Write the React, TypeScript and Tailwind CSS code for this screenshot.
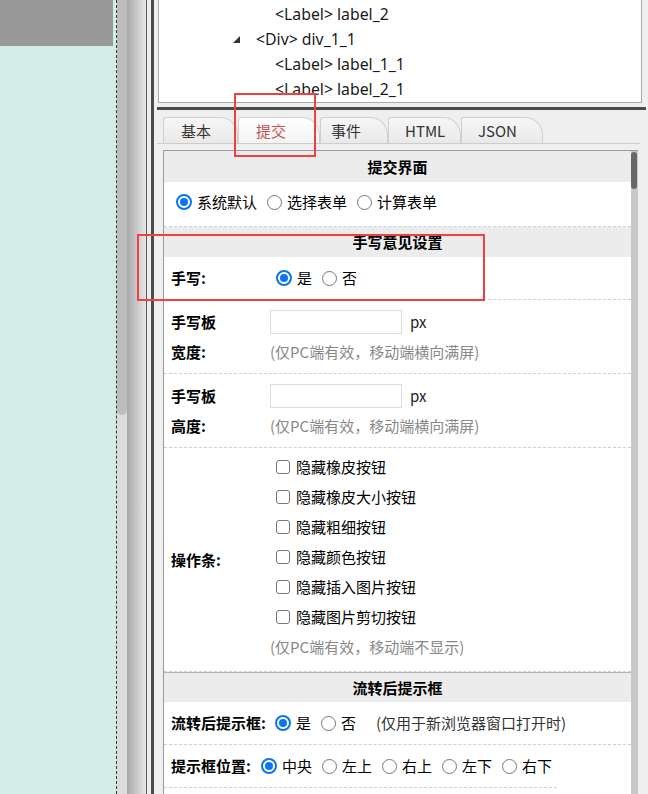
import React from "react";

const Radio = ({ checked }: { checked?: boolean }) =>
    checked ? (
        <span className="inline-flex w-[16px] h-[16px] shrink-0 items-center justify-center rounded-full border-2 border-[#0b74f1] bg-white">
            <span className="w-[8px] h-[8px] rounded-full bg-[#0b74f1]" />
        </span>
    ) : (
        <span className="inline-block w-[15px] h-[15px] shrink-0 rounded-full border border-[#767676] bg-white" />
    );

const RadioItem = ({ label, checked, className = "" }: { label: string; checked?: boolean; className?: string }) => (
    <span className={`inline-flex items-center ${className}`}>
        <Radio checked={checked} />
        <span className="ml-[5px]">{label}</span>
    </span>
);

const Checkbox = ({ label }: { label: string }) => (
    <div className="h-[30px] flex items-center">
        <span className="ml-[6px] w-[14px] h-[14px] rounded-[3px] border-[1.5px] border-[#777] bg-white shrink-0" />
        <span className="ml-[6px]">{label}</span>
    </div>
);

const SectionHeader = ({ title, top }: { title: string; top?: boolean }) => (
    <div
        className={`h-[30px] bg-[#ececec] flex items-center justify-center font-bold text-black ${
            top ? "border-t border-[#b4b4b4]" : ""
        }`}
    >
        {title}
    </div>
);

const SizeRow = ({ label }: { label: string }) => (
    <div className="h-[74px] border-b border-dashed border-[#cfcfcf] pt-[10px] flex">
        <div className="w-[106px] pl-[7px] font-bold text-black">
            <div className="h-[24px] flex items-center">手写板</div>
            <div className="h-[24px] mt-[6px] flex items-center">{label}</div>
        </div>
        <div>
            <div className="h-[24px] flex items-center">
                <span className="w-[132px] h-[24px] border border-[#dcdcdc] bg-white" />
                <span className="ml-[8px] text-[#222]">px</span>
            </div>
            <div className="h-[24px] mt-[6px] flex items-center text-[#888]">(仅PC端有效，移动端横向满屏)</div>
        </div>
    </div>
);

const tabs = [
    { name: "基本", w: "w-[75px]", pl: "pl-[17px]" },
    { name: "提交", w: "w-[82px]", pl: "pl-[17px]", active: true },
    { name: "事件", w: "w-[68px]", pl: "pl-[10px]" },
    { name: "HTML", w: "w-[73px]", pl: "pl-[16px]" },
    { name: "JSON", w: "w-[82px]", pl: "pl-[16px]" },
];

export default function App() {
    return (
        <div className="relative w-[648px] h-[794px] overflow-hidden flex font-['Noto_Sans_CJK_SC',sans-serif] text-[15px] leading-[20px]">
            {/* canvas */}
            <div className="w-[117px] shrink-0 bg-[#d4ece6] border-r border-dashed border-[#333]">
                <div className="w-[113px] h-[46px] bg-[#999999]" />
            </div>
            <div className="w-[10px] shrink-0 bg-[#dcdcdc]">
                <div className="h-[415px] bg-[#bdbdbd] rounded-b-[5px]" />
            </div>

            {/* splitter */}
            <div className="w-[19px] shrink-0 bg-linear-to-r from-[#a8a8a8] to-[#e8e8e8]" />
            <div className="w-[1px] shrink-0 bg-[#585858]" />
            <div className="w-[4px] shrink-0 bg-[#efefef]" />
            <div className="w-[3px] shrink-0 bg-[#4b4b4b]" />

            {/* property panel */}
            <div className="flex-1 flex flex-col bg-[#efefef] min-w-0">
                <div className="ml-[4px] mr-[6px] h-[103px] shrink-0 bg-white border-x border-b border-[#a8a8a8] pt-[2px] font-['Noto_Sans',sans-serif] text-[15.8px] leading-[25px] text-[#1a1a1a]">
                    <div className="pl-[116px]">&lt;Label&gt; label_2</div>
                    <div className="pl-[74px] flex items-center">
                        <svg width="7" height="7" viewBox="0 0 7 7" className="shrink-0">
                            <path d="M7 0 L7 7 L0 7 Z" fill="#333" />
                        </svg>
                        <span className="ml-[16px]">&lt;Div&gt; div_1_1</span>
                    </div>
                    <div className="pl-[116px]">&lt;Label&gt; label_1_1</div>
                    <div className="pl-[116px]">&lt;Label&gt; label_2_1</div>
                </div>

                <div className="mt-[4px] ml-[3px] mr-[2px] h-[3px] shrink-0 bg-[#4b4b4b]" />

                <div className="ml-[3px] mr-[8px] h-[34px] shrink-0 border-b border-[#cccccc] pt-[7px] pl-[6px] flex">
                    {tabs.map((t) => (
                        <div
                            key={t.name}
                            className={`${t.w} ${t.pl} h-[26px] flex items-center border-t border-x border-[#cfcfcf] rounded-tl-[3px] rounded-tr-[18px] ${
                                t.active
                                    ? "bg-linear-to-b from-white to-[#f3f3f3] text-[#c9524e]"
                                    : "bg-linear-to-b from-[#f6f6f6] to-[#e9e9e9] text-[#333]"
                            }`}
                        >
                            {t.name}
                        </div>
                    ))}
                </div>

                <div className="mt-[6px] ml-[9px] mr-[10px] flex-1 flex border-t border-l border-[#9a9a9a] bg-white min-h-0">
                    <div className="flex-1 flex flex-col text-black">
                        <div className="h-[31px] bg-[#ececec] flex items-center justify-center font-bold">提交界面</div>
                        <div className="h-[45px] border-b border-dashed border-[#cfcfcf] flex items-center pl-[7px] pb-[4px]">
                            <RadioItem checked label="系统默认" className="ml-[5px] mr-[5px]" />
                            <RadioItem label="选择表单" className="ml-[5px] mr-[5px]" />
                            <RadioItem label="计算表单" className="ml-[5px]" />
                        </div>

                        <SectionHeader title="手写意见设置" />
                        <div className="h-[43px] border-b border-dashed border-[#cfcfcf] flex items-center">
                            <div className="w-[106px] pl-[7px] font-bold">手写:</div>
                            <RadioItem checked label="是" className="ml-[6px] mr-[5px]" />
                            <RadioItem label="否" className="ml-[5px]" />
                        </div>

                        <SizeRow label="宽度:" />
                        <SizeRow label="高度:" />

                        <div className="h-[224px] border-b border-dashed border-[#cfcfcf] flex">
                            <div className="w-[106px] pl-[7px] font-bold flex items-center">操作条:</div>
                            <div className="pt-[4px]">
                                <Checkbox label="隐藏橡皮按钮" />
                                <Checkbox label="隐藏橡皮大小按钮" />
                                <Checkbox label="隐藏粗细按钮" />
                                <Checkbox label="隐藏颜色按钮" />
                                <Checkbox label="隐藏插入图片按钮" />
                                <Checkbox label="隐藏图片剪切按钮" />
                                <div className="h-[30px] flex items-center text-[#888]">(仅PC端有效，移动端不显示)</div>
                            </div>
                        </div>

                        <SectionHeader title="流转后提示框" top />
                        <div className="h-[43px] border-b border-dashed border-[#cfcfcf] flex items-center pl-[7px]">
                            <span className="font-bold">流转后提示框:</span>
                            <RadioItem checked label="是" className="ml-[9px] mr-[5px]" />
                            <RadioItem label="否" className="ml-[5px]" />
                            <span className="ml-[20px] text-[#333]">(仅用于新浏览器窗口打开时)</span>
                        </div>
                        <div className="h-[42px] flex items-center pl-[7px]">
                            <span className="font-bold">提示框位置:</span>
                            <RadioItem checked label="中央" className="ml-[10px] mr-[5px]" />
                            <RadioItem label="左上" className="ml-[5px] mr-[5px]" />
                            <RadioItem label="右上" className="ml-[5px] mr-[5px]" />
                            <RadioItem label="左下" className="ml-[5px] mr-[5px]" />
                            <RadioItem label="右下" className="ml-[5px]" />
                        </div>
                        <div className="w-[393px] border-b border-dashed border-[#cfcfcf]" />
                    </div>
                    <div className="w-[7px] shrink-0 bg-[#c8c8c8] pt-[1px]">
                        <div className="w-[6px] h-[37px] rounded-full bg-[#686868]" />
                    </div>
                </div>
            </div>

            {/* annotation boxes */}
            <div className="absolute left-[234px] top-[93px] w-[82px] h-[64px] border-2 border-[#f23f3f]" />
            <div className="absolute left-[137px] top-[234px] w-[348px] h-[67px] border-2 border-[#f23f3f]" />
        </div>
    );
}
